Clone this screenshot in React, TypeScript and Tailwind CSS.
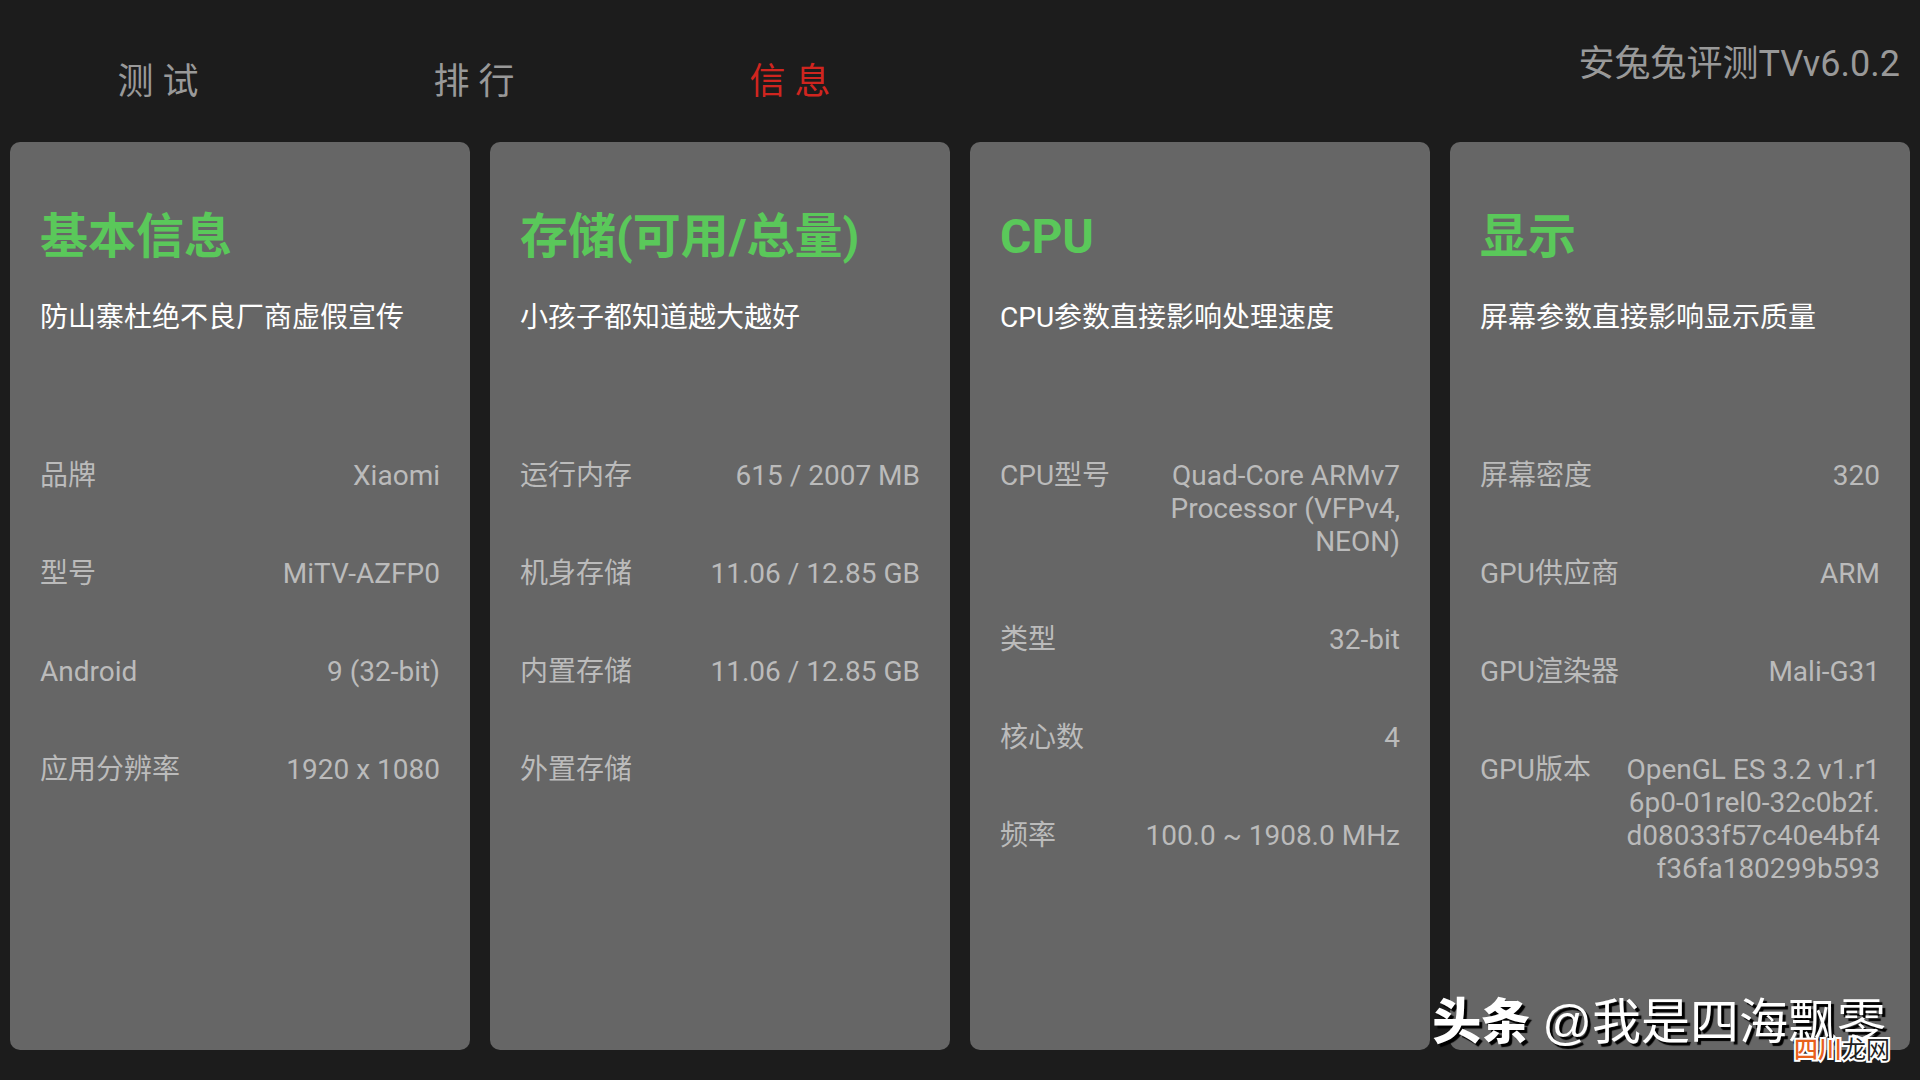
import React from 'react';

interface InfoRow {
  label: string;
  value: string;
}

interface InfoCard {
  title: string;
  subtitle: string;
  rows: InfoRow[];
}

const tabs = ['测 试', '排 行', '信 息'];

const cards: InfoCard[] = [
  {
    title: '基本信息',
    subtitle: '防山寨杜绝不良厂商虚假宣传',
    rows: [
      { label: '品牌', value: 'Xiaomi' },
      { label: '型号', value: 'MiTV-AZFP0' },
      { label: 'Android', value: '9 (32-bit)' },
      { label: '应用分辨率', value: '1920 x 1080' },
    ],
  },
  {
    title: '存储(可用/总量)',
    subtitle: '小孩子都知道越大越好',
    rows: [
      { label: '运行内存', value: '615 / 2007 MB' },
      { label: '机身存储', value: '11.06 / 12.85 GB' },
      { label: '内置存储', value: '11.06 / 12.85 GB' },
      { label: '外置存储', value: '' },
    ],
  },
  {
    title: 'CPU',
    subtitle: 'CPU参数直接影响处理速度',
    rows: [
      { label: 'CPU型号', value: 'Quad-Core ARMv7\nProcessor (VFPv4,\nNEON)' },
      { label: '类型', value: '32-bit' },
      { label: '核心数', value: '4' },
      { label: '频率', value: '100.0 ~ 1908.0 MHz' },
    ],
  },
  {
    title: '显示',
    subtitle: '屏幕参数直接影响显示质量',
    rows: [
      { label: '屏幕密度', value: '320' },
      { label: 'GPU供应商', value: 'ARM' },
      { label: 'GPU渲染器', value: 'Mali-G31' },
      { label: 'GPU版本', value: 'OpenGL ES 3.2 v1.r1\n6p0-01rel0-32c0b2f.\nd08033f57c40e4bf4\nf36fa180299b593' },
    ],
  },
];

const Card: React.FC<{ card: InfoCard }> = ({ card }) => (
  <section className="flex-1 min-w-0 rounded-[10px] bg-[#666666] px-[30px] pt-[62px]">
    <h2 className="text-5xl leading-[66px] font-bold text-[#5ac85a] whitespace-nowrap">{card.title}</h2>
    <p className="mt-[31px] text-[28px] leading-[33px] text-white whitespace-nowrap">{card.subtitle}</p>
    <dl className="mt-[125px] space-y-[65px] text-[28px] leading-[33px] text-[#bbbbbb]">
      {card.rows.map((row) => (
        <div key={row.label} className="flex justify-between">
          <dt className="whitespace-nowrap">{row.label}</dt>
          <dd className="text-right whitespace-pre">{row.value}</dd>
        </div>
      ))}
    </dl>
  </section>
);

const App: React.FC = () => {
  const active = 2;

  return (
    <div className="relative flex flex-col min-h-screen bg-[#1c1c1c] font-[Roboto,'Noto_Sans_CJK_SC',sans-serif]">
      <header className="flex justify-between h-[142px] pr-5">
        <nav className="flex pt-[61px]">
          {tabs.map((tab, index) => (
            <button key={tab} className={`w-[316px] h-[42px] text-4xl leading-[42px] ${index === active ? 'text-[#d0251f]' : 'text-[#999999]'}`}>
              {tab}
            </button>
          ))}
        </nav>
        <h1 className="pt-[43px] text-4xl leading-[42px] text-[#999999]">安兔兔评测TVv6.0.2</h1>
      </header>

      <main className="flex flex-1 gap-5 px-[10px] pb-[30px]">
        {cards.map((card) => (
          <Card key={card.title} card={card} />
        ))}
      </main>

      {/* Watermarks */}
      <div className="absolute right-[34px] bottom-[34px] flex items-baseline gap-3 text-[49px] leading-[48px] text-white whitespace-nowrap font-['Liberation_Sans','Noto_Sans_CJK_SC',sans-serif] [text-shadow:3px_3px_1px_#000000]">
        <span className="font-['Noto_Sans_CJK_SC',sans-serif] font-black">头条</span>
        <span>@我是四海飘零</span>
      </div>
      <div className="absolute right-[30px] bottom-[14px] text-2xl leading-8 [-webkit-text-stroke:4px_#ffffff] [paint-order:stroke_fill]">
        <span className="font-medium text-[#e8601c]">四川</span>
        <span className="text-[#222222]">龙网</span>
      </div>
    </div>
  );
};

export default App;
